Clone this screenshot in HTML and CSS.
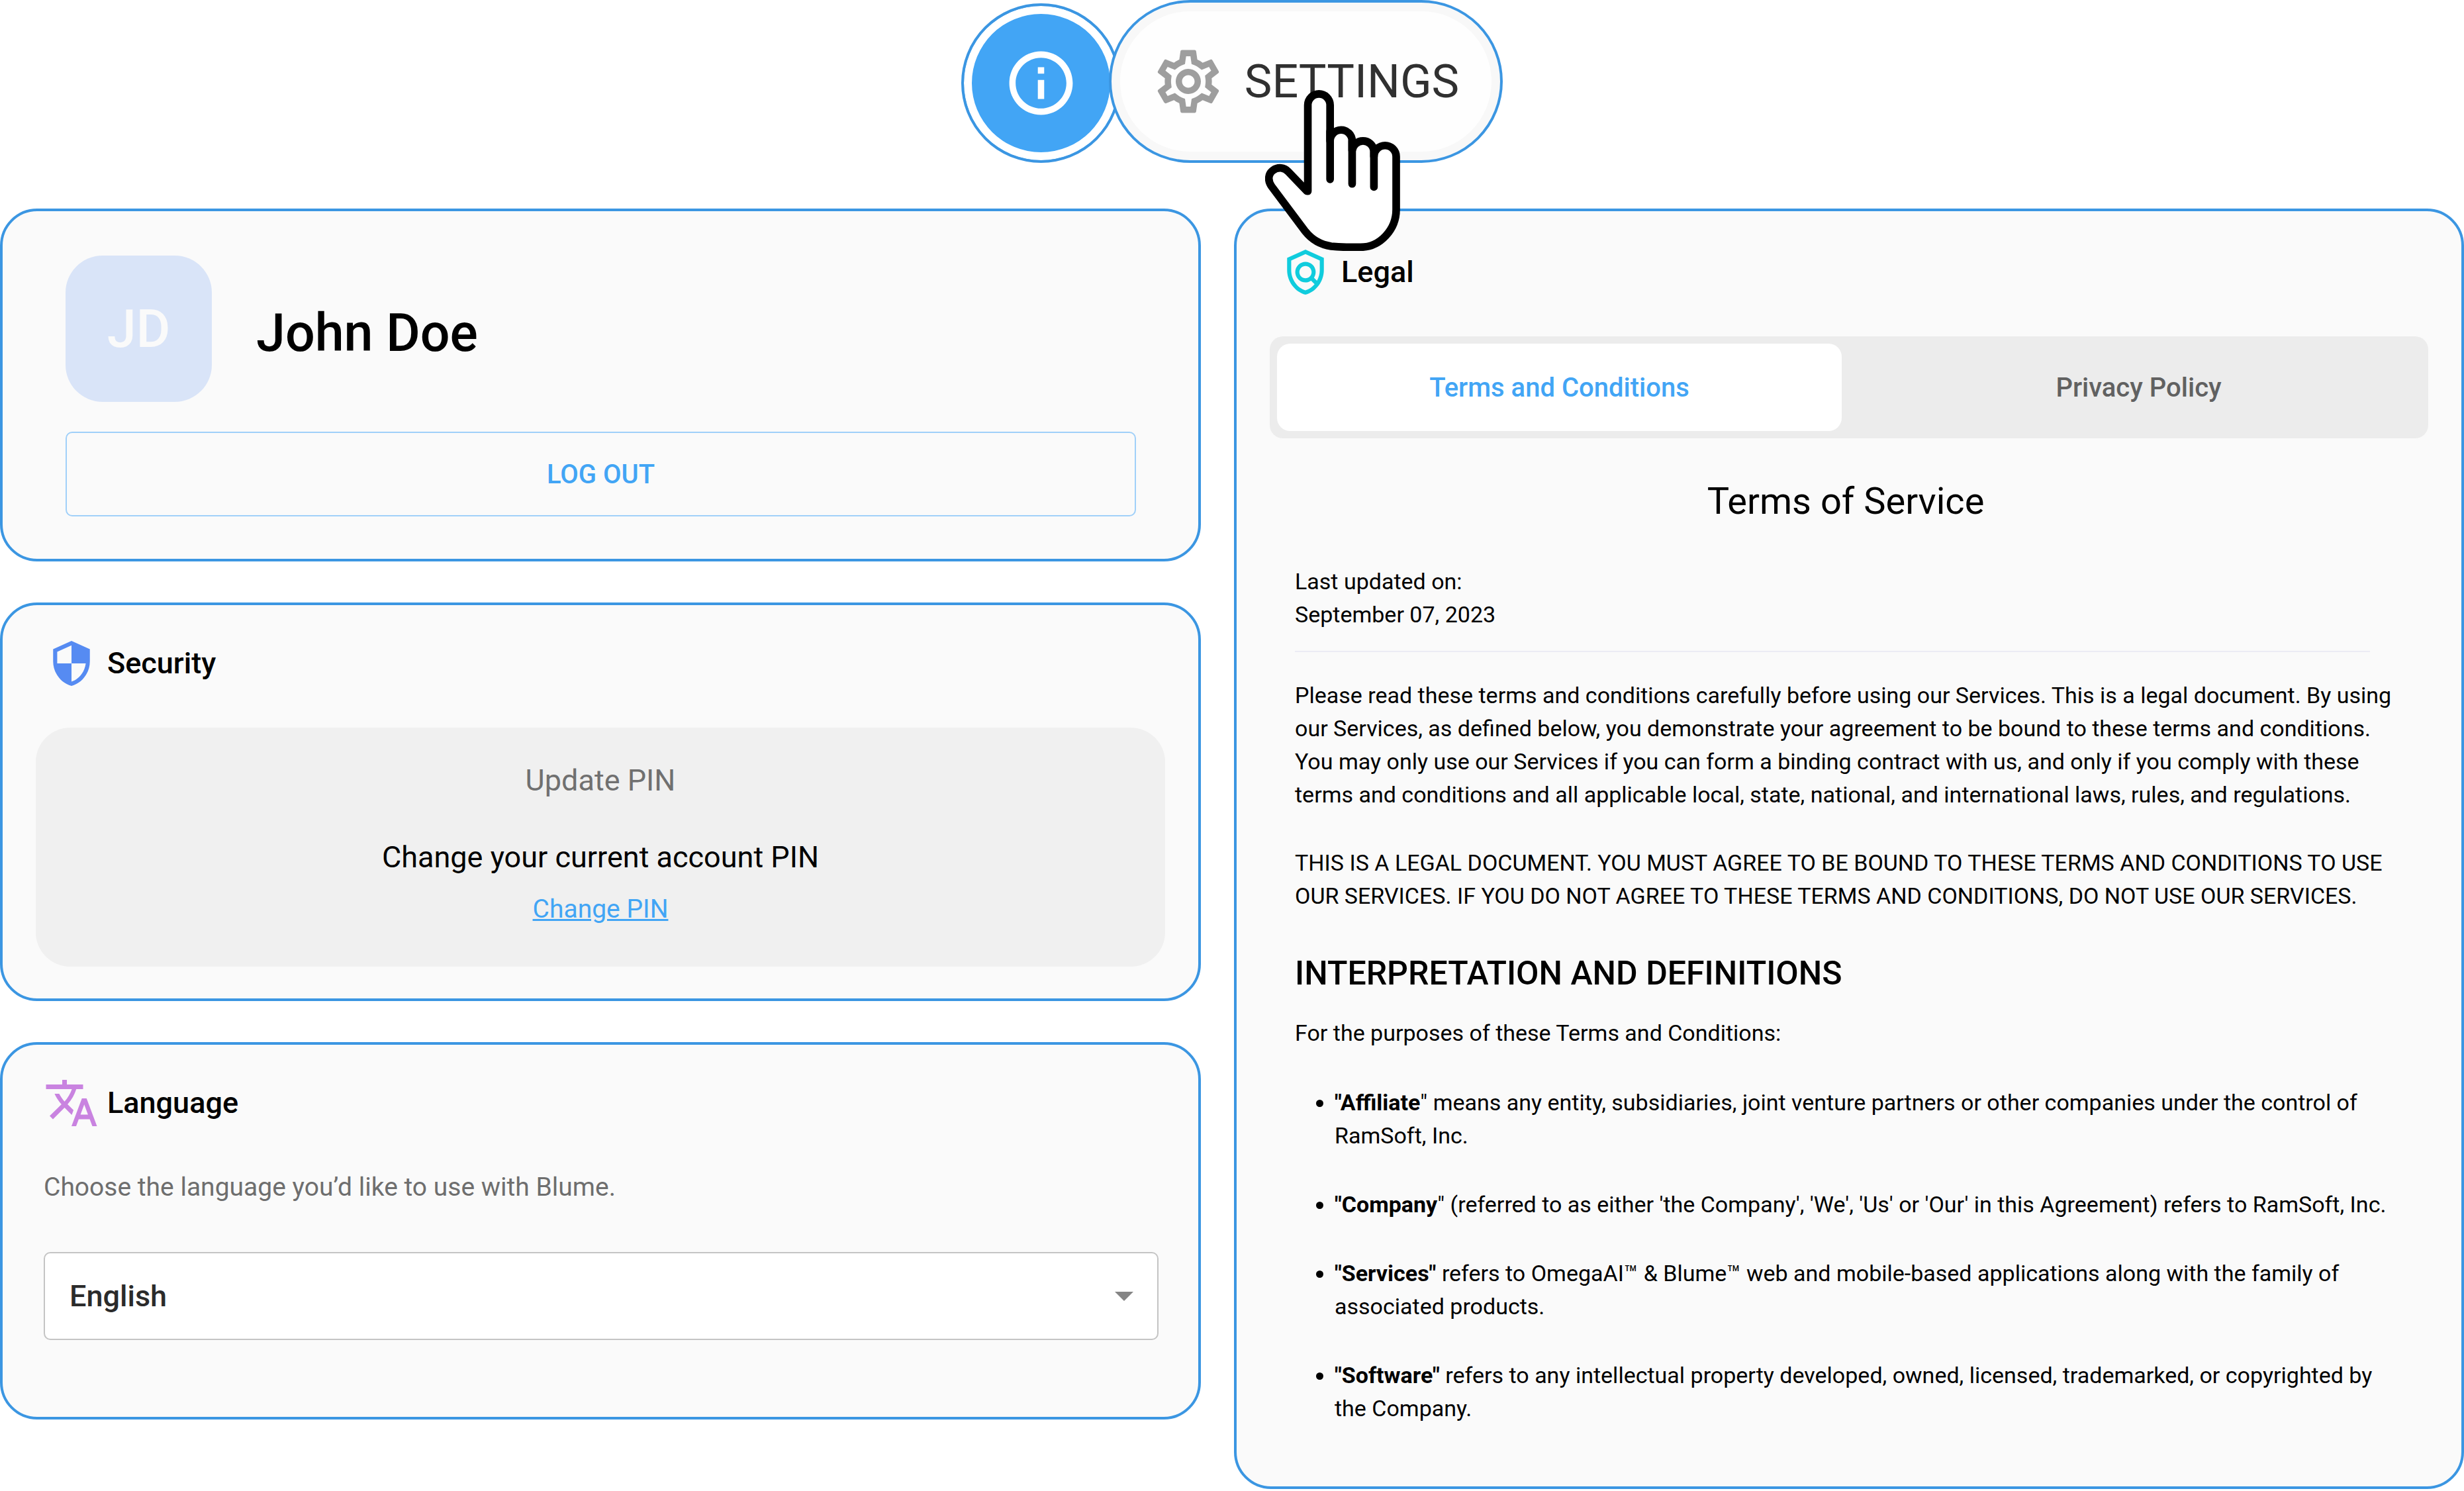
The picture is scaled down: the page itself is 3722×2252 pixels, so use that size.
FILE: index.html
```html
<!DOCTYPE html>
<html lang="en">
<head>
<meta charset="utf-8">
<title>Settings</title>
<link rel="stylesheet" href="styles.css">
</head>
<body>
<header class="topbar">
  <button class="info-button" type="button" aria-label="Information">
    <svg class="info-icon" viewBox="0 0 24 24" aria-hidden="true"><path d="M11 7h2v2h-2zm0 4h2v6h-2zm1-9C6.480 2 2 6.480 2 12s4.480 10 10 10 10-4.480 10-10S17.520 2 12 2zm0 18c-4.410 0-8-3.590-8-8s3.590-8 8-8 8 3.590 8 8-3.590 8-8 8z"/></svg>
  </button>
  <div class="settings-wrap">
    <button class="settings-button" type="button">
      <svg class="gear-icon" viewBox="0 0 24 24" aria-hidden="true"><path d="M19.430 12.980c.04-.32.07-.64.07-.98 0-.34-.03-.66-.07-.98l2.110-1.650c.19-.15.24-.42.12-.64l-2-3.460c-.09-.16-.26-.25-.44-.25-.06 0-.12.01-.17.03l-2.490 1c-.52-.4-1.080-.73-1.690-.98l-.38-2.650C14.460 2.180 14.250 2 14 2h-4c-.25 0-.46.18-.49.42l-.38 2.650c-.61.25-1.170.59-1.690.98l-2.490-1c-.06-.02-.12-.03-.18-.03-.17 0-.34.09-.43.25l-2 3.460c-.13.22-.07.49.12.64l2.110 1.650c-.04.32-.07.65-.07.98 0 .33.03.66.07.98l-2.110 1.650c-.19.15-.24.42-.12.64l2 3.460c.09.16.26.25.44.25.06 0 .12-.01.17-.03l2.490-1c.52.4 1.080.73 1.690.98l.38 2.650c.03.24.24.42.49.42h4c.25 0 .46-.18.49-.42l.38-2.650c.61-.25 1.170-.59 1.690-.98l2.490 1c.06.02.12.03.18.03.17 0 .34-.09.43-.25l2-3.460c.12-.22.07-.49-.12-.64l-2.110-1.650zm-1.980-1.710c.04.31.05.52.05.73 0 .21-.02.43-.05.73l-.14 1.130.89.7 1.080.84-.7 1.210-1.270-.51-1.040-.42-.9.68c-.43.32-.84.56-1.250.73l-1.060.43-.16 1.130-.2 1.350h-1.400l-.19-1.350-.16-1.130-1.060-.43c-.43-.18-.83-.41-1.230-.71l-.91-.7-1.060.43-1.270.51-.7-1.210 1.080-.84.89-.7-.14-1.130c-.03-.31-.05-.54-.05-.74s.02-.43.05-.73l.14-1.130-.89-.7-1.080-.84.7-1.210 1.270.51 1.040.42.9-.68c.43-.32.84-.56 1.250-.73l1.060-.43.16-1.130.2-1.350h1.390l.19 1.350.16 1.130 1.060.43c.43.18.83.41 1.230.71l.91.7 1.060-.43 1.270-.51.7 1.210-1.070.85-.89.7.14 1.130zM12 8c-2.210 0-4 1.790-4 4s1.790 4 4 4 4-1.790 4-4-1.790-4-4-4zm0 6c-1.100 0-2-.9-2-2s.9-2 2-2 2 .9 2 2-.9 2-2 2z"/></svg>
      <span>SETTINGS</span>
    </button>
    <svg class="hand-cursor" viewBox="32 48 613 730" aria-hidden="true">
      <path fill="#fff" d="M226 507V116A50 50 0 0 1 327 116V279A50 50 0 0 1 427 279V322A50 50 0 0 1 526 322V350A50 50 0 0 1 627 350V590C627 680 555 761 465 761C410 762 370 761 332 757C285 750 245 728 215 690L62 486C42 458 46 428 68 412C92 395 120 400 137 418L222 507Z"/>
      <path fill="none" d="M327 235V453M427 279V474M526 322V488"/>
    </svg>
  </div>
</header>

<main class="layout">
  <div class="column">
    <section class="card profile">
      <div class="profile-head">
        <div class="avatar" aria-hidden="true">JD</div>
        <h1 class="profile-name">John Doe</h1>
      </div>
      <button class="logout" type="button">LOG OUT</button>
    </section>

    <section class="card security">
      <h2 class="card-title">
        <span class="title-icon"><svg class="shield" viewBox="0 0 24 24" fill="#568bf2" aria-hidden="true"><path d="M12 1L3 5v6c0 5.550 3.840 10.740 9 12 5.160-1.260 9-6.450 9-12V5l-9-4zm0 10.990h7c-.53 4.120-3.280 7.790-7 8.940V12H5V6.300l7-3.110v8.800z"/></svg></span>
        Security
      </h2>
      <div class="pin-panel">
        <h3 class="pin-title">Update PIN</h3>
        <p class="pin-text">Change your current account PIN</p>
        <a class="pin-link" href="#change-pin">Change PIN</a>
      </div>
    </section>

    <section class="card language">
      <h2 class="card-title">
        <span class="title-icon"><svg class="translate" viewBox="0 0 24 24" fill="#c983e0" aria-hidden="true"><path d="M12.870 15.070l-2.540-2.510.03-.03c1.740-1.940 2.980-4.170 3.710-6.530H17V4h-7V2H8v2H1v1.990h11.170C11.500 7.920 10.440 9.750 9 11.350 8.070 10.320 7.300 9.190 6.690 8h-2c.73 1.630 1.730 3.170 2.980 4.560l-5.090 5.020L4 19l5-5 3.110 3.110.76-2.040zM18.500 10h-2L12 22h2l1.120-3h4.750L21 22h2l-4.500-12zm-2.620 7l1.620-4.330L19.120 17h-3.240z"/></svg></span>
        Language
      </h2>
      <div class="language-body">
        <label class="language-label" for="language">Choose the language you’d like to use with Blume.</label>
        <div class="select-box">
          <select id="language" class="select">
            <option>English</option>
          </select>
          <svg class="select-arrow" viewBox="0 0 28 14" aria-hidden="true"><path d="M0 0h28L14 14z"/></svg>
        </div>
      </div>
    </section>
  </div>

  <section class="card legal">
    <h2 class="card-title">
      <span class="title-icon"><svg class="shield" viewBox="0 0 24 24" fill="#10ccdd" aria-hidden="true"><path d="M12 1L3 5v6c0 5.550 3.840 10.740 9 12 5.160-1.260 9-6.450 9-12V5l-9-4zm7 10c0 1.850-.51 3.650-1.380 5.210l-1.450-1.450c1.290-1.940 1.070-4.580-.64-6.290-1.950-1.950-5.120-1.950-7.070 0-1.950 1.950-1.950 5.120 0 7.070 1.710 1.710 4.350 1.920 6.290.64l1.720 1.720c-1.190 1.420-2.730 2.510-4.470 3.040-4.020-1.250-7-5.420-7-9.940V6.300l7-3.110 7 3.110V11zm-7 4c-1.660 0-3-1.340-3-3s1.340-3 3-3 3 1.340 3 3-1.340 3-3 3z"/></svg></span>
      Legal
    </h2>
    <div class="tabs" role="tablist">
      <button class="tab tab-active" type="button" role="tab" aria-selected="true">Terms and Conditions</button>
      <button class="tab" type="button" role="tab" aria-selected="false">Privacy Policy</button>
    </div>
    <article class="terms">
      <h3 class="terms-title">Terms of Service</h3>
      <p class="updated">Last updated on:<br>September 07, 2023</p>
      <hr class="divider">
      <p class="intro">Please read these terms and conditions carefully before using our Services. This is a legal document. By using our Services, as defined below, you demonstrate your agreement to be bound to these terms and conditions. You may only use our Services if you can form a binding contract with us, and only if you comply with these terms and conditions and all applicable local, state, national, and international laws, rules, and regulations.</p>
      <p class="notice">THIS IS A LEGAL DOCUMENT. YOU MUST AGREE TO BE BOUND TO THESE TERMS AND CONDITIONS TO USE OUR SERVICES. IF YOU DO NOT AGREE TO THESE TERMS AND CONDITIONS, DO NOT USE OUR SERVICES.</p>
      <h4 class="terms-heading">INTERPRETATION AND DEFINITIONS</h4>
      <p>For the purposes of these Terms and Conditions:</p>
      <ul class="definitions">
        <li><b>"Affiliate</b>" means any entity, subsidiaries, joint venture partners or other companies under the control of RamSoft, Inc.</li>
        <li><b>"Company</b>" (referred to as either 'the Company', 'We', 'Us' or 'Our' in this Agreement) refers to RamSoft, Inc.</li>
        <li><b>"Services"</b> refers to OmegaAI™ &amp; Blume™ web and mobile-based applications along with the family of associated products.</li>
        <li><b>"Software"</b> refers to any intellectual property developed, owned, licensed, trademarked, or copyrighted by the Company.</li>
      </ul>
    </article>
  </section>
</main>
</body>
</html>
```
FILE: styles.css
```css
* { box-sizing: border-box; }

body {
  margin: 0;
  background: #fff;
  color: #000;
  font-family: Roboto, "Liberation Sans", sans-serif;
  font-size: 34px;
  line-height: 50px;
}

h1, h2, h3, h4, p, ul { margin: 0; padding: 0; }

button, select { font-family: inherit; cursor: pointer; }

svg { display: block; }

.topbar {
  display: flex;
  justify-content: center;
  align-items: flex-end;
  margin-bottom: 69px;
}

.info-button {
  display: grid;
  place-items: center;
  width: 241px;
  height: 241px;
  padding: 0;
  border: 4px solid #3b96e2;
  border-radius: 50%;
  background: #42a5f5;
  box-shadow: inset 0 0 0 12px #fff;
}

.info-icon { width: 115px; height: 115px; fill: #fff; }

.settings-wrap { position: relative; margin-left: -18px; }

.settings-button {
  display: flex;
  align-items: center;
  gap: 28px;
  height: 246px;
  padding: 0 62px 0 59px;
  border: 4px solid #3b96e2;
  border-radius: 124px;
  background: #fefefe;
  box-shadow: inset 0 0 0 13px #f8f8f8;
  color: #303030;
  font-size: 70px;
}

.gear-icon { width: 114px; height: 114px; fill: #9e9e9e; }

.hand-cursor {
  position: absolute;
  left: 236px;
  top: 136px;
  width: 204px;
  height: 243px;
  stroke: #000;
  stroke-width: 35;
  stroke-linecap: round;
  stroke-linejoin: round;
  pointer-events: none;
}

.layout {
  display: grid;
  grid-template-columns: 1814fr 1858fr;
  gap: 50px;
}

.column { display: flex; flex-direction: column; gap: 62px; }

.card {
  border: 4px solid #3b96e2;
  border-radius: 56px;
  background: #fafafa;
  padding: 46px 50px 48px;
}

.card-title {
  display: flex;
  align-items: center;
  gap: 12px;
  padding-left: 12px;
  font-size: 45px;
  font-weight: 500;
}

.title-icon { display: grid; place-items: center; width: 84px; height: 84px; }
.shield { width: 74px; height: 74px; }
.translate { width: 84px; height: 84px; }

.profile { padding: 67px 94px 64px 95px; }

.profile-head {
  display: flex;
  align-items: center;
  gap: 67px;
  margin-bottom: 45px;
}

.avatar {
  display: grid;
  place-items: center;
  width: 221px;
  height: 221px;
  border-radius: 56px;
  background: #d9e4f8;
  color: #fafafa;
  font-size: 79px;
  font-weight: 500;
}

.profile-name { padding-top: 12px; font-size: 79px; font-weight: 500; line-height: 90px; }

.logout {
  display: block;
  width: 100%;
  height: 128px;
  border: 2px solid #a0d0f9;
  border-radius: 10px;
  background: transparent;
  color: #42a5f5;
  font-size: 40px;
  font-weight: 500;
}

.pin-panel {
  display: flex;
  flex-direction: column;
  align-items: center;
  margin-top: 55px;
  padding: 50px 50px 62px;
  border-radius: 52px;
  background: #f0f0f0;
  text-align: center;
}

.pin-title { color: #707070; font-size: 45px; font-weight: 400; line-height: 60px; }
.pin-text { margin: 56px 0 23px; font-size: 45px; line-height: 60px; }
.pin-link { color: #42a5f5; font-size: 39px; }

.language { padding-bottom: 116px; }

.language-body { padding: 60px 10px 0 12px; }

.language-label { display: block; margin-bottom: 73px; color: #6e6e6e; font-size: 39px; }

.select-box { display: grid; align-items: center; }

.select {
  grid-area: 1 / 1;
  appearance: none;
  width: 100%;
  height: 133px;
  padding: 0 37px;
  border: 2px solid #c4c4c4;
  border-radius: 10px;
  background: #fff;
  color: #2b2b2b;
  font-size: 45px;
  font-weight: 500;
}

.select-arrow {
  grid-area: 1 / 1;
  justify-self: end;
  width: 28px;
  height: 14px;
  margin-right: 38px;
  fill: #858585;
  pointer-events: none;
}

.legal { padding-top: 50px; padding-bottom: 93px; }

.tabs {
  display: grid;
  grid-template-columns: 1fr 1fr;
  gap: 22px;
  margin-top: 55px;
  padding: 11px;
  border-radius: 20px;
  background: #ececec;
}

.tab {
  height: 132px;
  border: 0;
  border-radius: 20px;
  background: transparent;
  color: #616161;
  font-size: 40px;
  font-weight: 500;
}

.tab-active { background: #fff; color: #42a5f5; }

.terms { padding: 60px 48px 0 38px; }

.terms-title {
  font-size: 56px;
  font-weight: 400;
  line-height: 70px;
  text-align: center;
}

.updated { margin-top: 61px; }

.divider {
  height: 2px;
  margin: 30px 40px 40px 0;
  border: 0;
  background: #ececf4;
}

.notice { margin-top: 53px; }

.terms-heading {
  margin: 62px 0 35px;
  font-size: 50px;
  font-weight: 500;
  line-height: 60px;
}

.definitions {
  display: flex;
  flex-direction: column;
  gap: 54px;
  margin-top: 55px;
  padding-left: 60px;
}

.definitions b { font-weight: 700; }
```
